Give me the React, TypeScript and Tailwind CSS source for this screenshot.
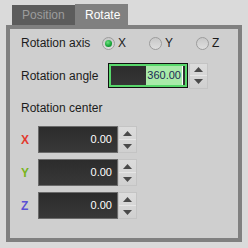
import React from "react";

const font = { fontFamily: '"Liberation Sans", Arial, sans-serif' };

const Radio = ({ label, checked }: { label: string; checked?: boolean }) => (
  <div className="flex items-center gap-[3px]">
    <div className="w-[13px] h-[13px] rounded-full border border-[#9c9c9c] bg-gradient-to-b from-[#c8c8c8] to-[#dedede] flex items-center justify-center">
      {checked && (
        <div className="w-[7px] h-[7px] rounded-full bg-[radial-gradient(circle_at_40%_35%,#6ee27f,#14a236_60%,#0b7a24)]"></div>
      )}
    </div>
    <span className="text-[12px] text-[#1c1c1c]">{label}</span>
  </div>
);

const Spin = ({ h }: { h: string }) => (
  <div className={`w-[19px] ${h} flex flex-col border border-[#c4c4c4] bg-gradient-to-b from-[#dcdcdc] to-[#d0d0d0]`}>
    <div className="flex-1 flex items-center justify-center border-b border-[#e6e6e6]">
      <svg width="9" height="5" viewBox="0 0 9 5">
        <path d="M0 5 L4.5 0 L9 5 Z" fill="#4a4a4a" />
      </svg>
    </div>
    <div className="flex-1 flex items-center justify-center">
      <svg width="9" height="5" viewBox="0 0 9 5">
        <path d="M0 0 L9 0 L4.5 5 Z" fill="#4a4a4a" />
      </svg>
    </div>
  </div>
);

const AxisRow = ({ axis, color }: { axis: string; color: string }) => (
  <div className="flex items-center h-[27px]">
    <span className={`w-[17px] text-[12px] font-bold ${color}`}>{axis}</span>
    <div className="w-[80px] h-full border border-[#6a6a6a] bg-gradient-to-b from-[#2c2c2c] to-[#383838] flex items-center justify-end pr-[5px]">
      <span className="text-[11px] text-white">0.00</span>
    </div>
    <Spin h="h-[27px]" />
  </div>
);

export default function App() {
  return (
    <div className="w-[248px] h-[248px] bg-[#dadada] overflow-hidden" style={font}>
      {/* Tabs */}
      <div className="flex items-end pl-[12px] pt-[4px] h-[25px]">
        <div className="w-[63px] h-[20px] bg-[#5c5c5c] text-[#9d9d9d] text-[12px] flex items-center pl-[10px]">
          Position
        </div>
        <div className="w-[53px] h-[21px] bg-[#808080] text-white text-[12px] flex items-center pl-[10px]">
          Rotate
        </div>
      </div>

      {/* Panel */}
      <div className="ml-[6px] w-[236px] h-[217px] border-4 border-[#808080] bg-[#cfcfcf] pl-[11px] pt-[4px]">
        <div className="flex items-center h-[20px]">
          <span className="w-[81px] text-[12px] text-[#1c1c1c]">Rotation axis</span>
          <div className="flex items-center gap-[23px]">
            <Radio label="X" checked />
            <Radio label="Y" />
            <Radio label="Z" />
          </div>
        </div>

        <div className="flex items-center h-[25px] mt-[10px]">
          <span className="w-[87px] text-[12px] text-[#1c1c1c]">Rotation angle</span>
          <div className="w-[80px] h-full border border-[#111] mr-[1px]">
            <div className="w-full h-full border-2 border-[#58d76b] bg-gradient-to-b from-[#2c2c2c] to-[#363636] flex items-center justify-end pr-[2px]">
              <span className="text-[11px] text-[#1b2a55] bg-[#a9eaa9] h-full flex items-center pl-[1px] pr-[1px] border-r border-white">
                360.00
              </span>
            </div>
          </div>
          <Spin h="h-[26px]" />
        </div>

        <div className="h-[16px] mt-[12px] flex items-center text-[12px] text-[#1c1c1c]">Rotation center</div>

        <div className="flex flex-col gap-[6px] mt-[10px]">
          <AxisRow axis="X" color="text-[#e23a2e]" />
          <AxisRow axis="Y" color="text-[#78b41c]" />
          <AxisRow axis="Z" color="text-[#5a4fd4]" />
        </div>
      </div>
    </div>
  );
}
